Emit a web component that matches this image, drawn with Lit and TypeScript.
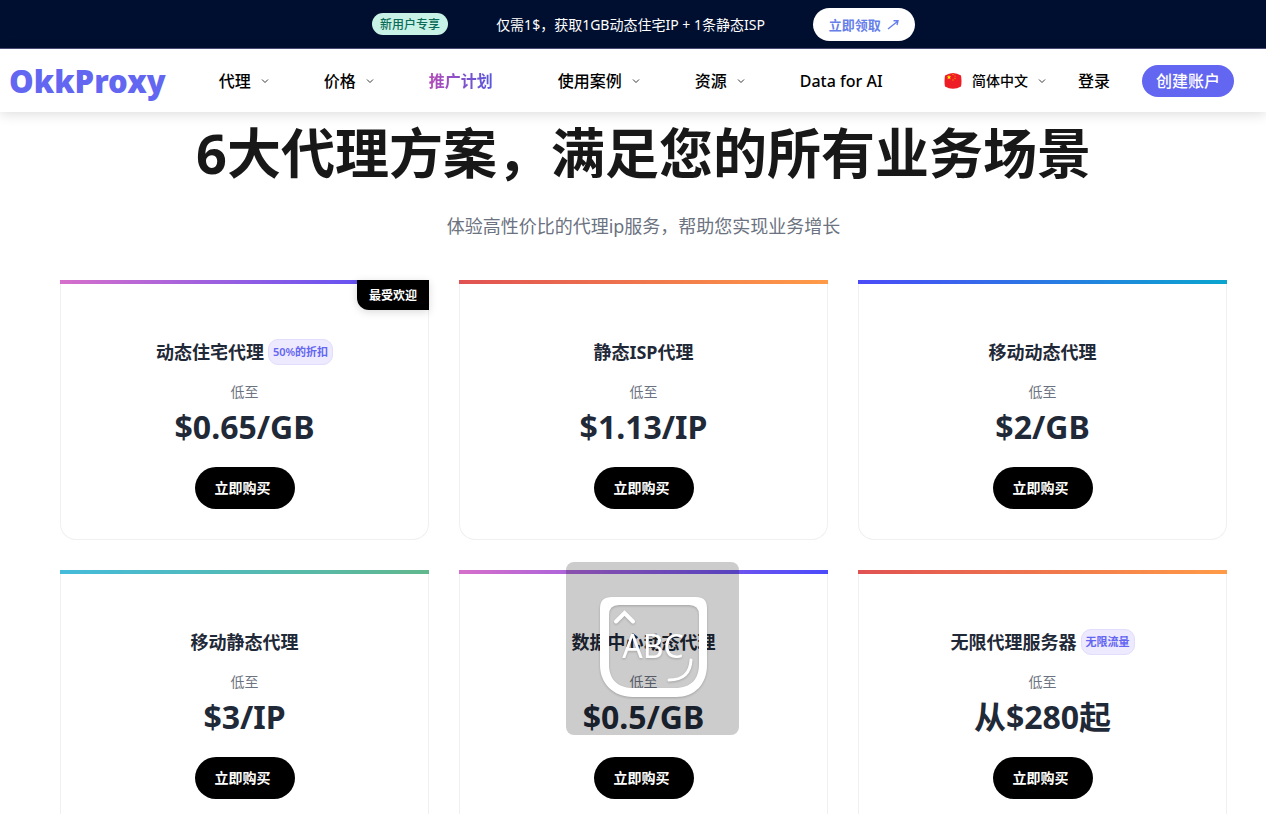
import { LitElement, html, css, svg, nothing } from "lit";
import { customElement, property } from "lit/decorators.js";

interface Plan {
  name: string;
  price: string;
  tone: string;
  tag?: string;
  ribbon?: string;
}

const PLANS: Plan[] = [
  { name: "动态住宅代理", price: "$0.65/GB", tone: "violet", tag: "50%的折扣", ribbon: "最受欢迎" },
  { name: "静态ISP代理", price: "$1.13/IP", tone: "orange" },
  { name: "移动动态代理", price: "$2/GB", tone: "blue" },
  { name: "移动静态代理", price: "$3/IP", tone: "green" },
  { name: "数据中心动态代理", price: "$0.5/GB", tone: "violet" },
  { name: "无限代理服务器", price: "从$280起", tone: "orange", tag: "无限流量" },
];

const chevron = html`<svg class="chevron" viewBox="0 0 8 8" aria-hidden="true">
  <path d="M1 2.5 L4 5.5 L7 2.5" fill="none" stroke="#222" stroke-width="0.9" />
</svg>`;

@customElement("promo-bar")
class PromoBar extends LitElement {
  static styles = css`
    :host {
      display: flex;
      align-items: center;
      justify-content: center;
      gap: 48px;
      height: 48px;
      padding-left: 21px;
      background: #000f2f;
      border-bottom: 1px solid #4d4f78;
      color: #fff;
      font-size: 14px;
    }
    .label {
      padding: 1px 8px 0;
      border-radius: 11px;
      background: #c9f2e7;
      color: #0c6b58;
      font-size: 12px;
      font-weight: 500;
      line-height: 21px;
    }
    .claim {
      display: flex;
      align-items: center;
      gap: 6px;
      padding: 1px 16px 0;
      border-radius: 17px;
      background: #fff;
      color: #667eea;
      font-size: 13px;
      font-weight: 700;
      line-height: 32px;
      text-decoration: none;
    }
    .arrow {
      width: 12px;
      height: 12px;
    }
  `;
  render() {
    return html`
      <span class="label">新用户专享</span>
      <span>仅需1$，获取1GB动态住宅IP + 1条静态ISP</span>
      <a class="claim" href="#claim">立即领取
        <svg class="arrow" viewBox="0 0 12 12" aria-hidden="true">
          <path d="M1 10 L11 2 M6.5 1.8 H11 L10 6" fill="none" stroke="#667eea" stroke-width="1.4" />
        </svg>
      </a>
    `;
  }
}

@customElement("site-header")
class SiteHeader extends LitElement {
  static styles = css`
    :host {
      position: relative;
      z-index: 1;
      display: flex;
      align-items: center;
      height: 63px;
      padding: 0 32px 0 9px;
      background: #fff;
      box-shadow: 0 2px 12px rgba(0, 0, 0, 0.14);
      color: #000;
      font-size: 16px;
      font-weight: 500;
    }
    a {
      color: inherit;
      text-decoration: none;
    }
    .logo {
      color: #6366f1;
      font-size: 31px;
      font-weight: 900;
      line-height: 44px;
    }
    nav {
      display: flex;
      gap: 55px;
      margin-left: 53px;
    }
    button {
      display: flex;
      align-items: center;
      gap: 10px;
      padding: 0;
      border: 0;
      background: none;
      color: inherit;
      font: inherit;
      line-height: 24px;
    }
    nav a,
    .login {
      line-height: 24px;
    }
    .chevron {
      width: 8px;
      height: 8px;
    }
    .promo {
      margin-right: 10px;
      background: linear-gradient(90deg, #b54bb8, #5558dc);
      background-clip: text;
      -webkit-background-clip: text;
      color: transparent;
      font-weight: 700;
    }
    .tools {
      display: flex;
      align-items: center;
      gap: 32px;
      margin-left: auto;
    }
    .lang {
      font-size: 14px;
    }
    .flag {
      width: 18px;
      height: 18px;
    }
    .signup {
      padding: 0 14px;
      border-radius: 16px;
      background: #6366f1;
      color: #fff;
      line-height: 32px;
    }
  `;
  render() {
    return html`
      <a class="logo" href="#home">OkkProxy</a>
      <nav>
        <button type="button">代理${chevron}</button>
        <button type="button">价格${chevron}</button>
        <a class="promo" href="#affiliate">推广计划</a>
        <button type="button">使用案例${chevron}</button>
        <button type="button">资源${chevron}</button>
        <a href="#data">Data for AI</a>
      </nav>
      <div class="tools">
        <button type="button" class="lang">
          <svg class="flag" viewBox="0 0 18 18" aria-hidden="true">
            <path d="M1 3.5 Q9 -1.5 17 3.5 Q18 9 17 14.5 Q9 19 1 14.5 Q0 9 1 3.5Z" fill="#ee1c25" />
            <path d="M5 2.8 L5.6 4.5 H7.3 L5.9 5.5 L6.5 7.2 L5 6.2 L3.5 7.2 L4.1 5.5 L2.7 4.5 H4.4Z" fill="#ff0" />
            <g fill="#ffb000">
              <circle cx="9" cy="2.4" r="0.6" /><circle cx="11" cy="4" r="0.6" />
              <circle cx="11" cy="6.3" r="0.6" /><circle cx="9" cy="7.9" r="0.6" />
            </g>
          </svg>
          简体中文${chevron}
        </button>
        <a class="login" href="#login">登录</a>
        <a class="signup" href="#signup">创建账户</a>
      </div>
    `;
  }
}

@customElement("plan-card")
class PlanCard extends LitElement {
  @property({ attribute: false }) plan!: Plan;

  static styles = css`
    :host {
      display: block;
    }
    .card {
      position: relative;
      display: flex;
      flex-direction: column;
      align-items: center;
      padding: 0 20px 30px;
      border: 1px solid #f0f0f2;
      border-top: 0;
      border-radius: 0 0 16px 16px;
      background: #fff;
    }
    .strip {
      align-self: stretch;
      height: 4px;
      margin: 0 -21px 53px;
    }
    .violet { background: linear-gradient(90deg, #d66fcb, #4b4bfb); }
    .orange { background: linear-gradient(90deg, #e05252, #ff9b47); }
    .blue { background: linear-gradient(90deg, #4b4bf8, #0aa5cf); }
    .green { background: linear-gradient(90deg, #45bbdb, #61b88e); }
    .ribbon {
      position: absolute;
      top: 0;
      right: -1px;
      padding: 2px 12px 0;
      border-radius: 0 0 0 12px;
      background: #000;
      box-shadow: 0 2px 8px rgba(0, 0, 0, 0.15);
      color: #fff;
      font-size: 12px;
      font-weight: 700;
      line-height: 28px;
    }
    .head {
      display: flex;
      align-items: center;
      gap: 4px;
      margin-bottom: 15px;
    }
    h2 {
      margin: 0;
      color: #1f2937;
      font-size: 18px;
      font-weight: 700;
      line-height: 30px;
    }
    .tag {
      padding: 0 4px;
      border: 1px solid #e2dcfd;
      border-radius: 10px;
      background: #ede9fe;
      color: #6366f1;
      font-size: 11px;
      font-weight: 600;
      line-height: 24px;
    }
    .from {
      color: #6b7280;
      font-size: 14px;
      line-height: 20px;
    }
    .price {
      margin: 5px 0 20px;
      color: #1f2937;
      font-size: 32px;
      font-weight: 700;
      line-height: 40px;
    }
    .buy {
      padding: 0 24px 0 20px;
      border: 0;
      border-radius: 21px;
      background: #000;
      color: #fff;
      font: inherit;
      font-size: 14px;
      font-weight: 700;
      line-height: 42px;
    }
  `;
  render() {
    const { name, price, tone, tag, ribbon } = this.plan;
    return html`
      <article class="card">
        <div class="strip ${tone}"></div>
        ${ribbon ? html`<span class="ribbon">${ribbon}</span>` : nothing}
        <div class="head">
          <h2>${name}</h2>
          ${tag ? html`<span class="tag">${tag}</span>` : nothing}
        </div>
        <div class="from">低至</div>
        <div class="price">${price}</div>
        <button type="button" class="buy">立即购买</button>
      </article>
    `;
  }
}

@customElement("input-mode-badge")
class InputModeBadge extends LitElement {
  static styles = css`
    :host {
      display: block;
      width: 173px;
      height: 173px;
      border-radius: 8px;
      background: rgba(0, 0, 0, 0.2);
      pointer-events: none;
    }
    .icon {
      display: block;
      width: 100%;
      height: 100%;
      filter: drop-shadow(0 1px 1px rgba(0, 0, 0, 0.2));
    }
    .abc {
      font-size: 32px;
      fill: #fff;
    }
  `;
  render() {
    return html`<svg class="icon" viewBox="0 0 173 173">
      ${svg`
        <path fill="#fff" fill-rule="evenodd" d="M46 35 H130 Q141 35 141 46 V103 C141 122 129 135 110 135 H67 C47 135 34 121 34 103 V46 Q34 35 46 35 Z
          M53 43 Q43 43 43 53 V102 C43 118 52 126 68 126 H109 C125 126 133 117 133 102 V53 Q133 43 123 43 Z" />
        <path d="M50 59.5 L58.5 51 L67 59.5" fill="none" stroke="#fff" stroke-width="4" stroke-linecap="round" />
        <path d="M103 118 Q124 118 125 98" fill="none" stroke="#fff" stroke-width="3" stroke-linecap="round" />
        <text class="abc" x="87" y="96" text-anchor="middle">ABC</text>
      `}
    </svg>`;
  }
}

@customElement("app-root")
class AppRoot extends LitElement {
  static styles = css`
    :host {
      position: relative;
      display: block;
      background: #fff;
      font-family: "Noto Sans", "Noto Sans CJK SC", sans-serif;
    }
    main {
      padding: 0 39px 30px 60px;
    }
    h1 {
      margin: 0;
      color: #181818;
      font-size: 54px;
      font-weight: 700;
      line-height: 82px;
      text-align: center;
    }
    .lead {
      margin: 18px 0 40px;
      color: #6b7280;
      font-size: 18px;
      line-height: 28px;
      text-align: center;
    }
    .plans {
      display: grid;
      grid-template-columns: repeat(3, 1fr);
      gap: 30px;
    }
    .badge {
      position: absolute;
      top: 562px;
      left: calc(50% - 67px);
      z-index: 2;
    }
  `;
  render() {
    return html`
      <promo-bar></promo-bar>
      <site-header></site-header>
      <main>
        <h1>6大代理方案，满足您的所有业务场景</h1>
        <p class="lead">体验高性价比的代理ip服务，帮助您实现业务增长</p>
        <section class="plans">
          ${PLANS.map((plan) => html`<plan-card .plan=${plan}></plan-card>`)}
        </section>
      </main>
      <input-mode-badge class="badge"></input-mode-badge>
    `;
  }
}
